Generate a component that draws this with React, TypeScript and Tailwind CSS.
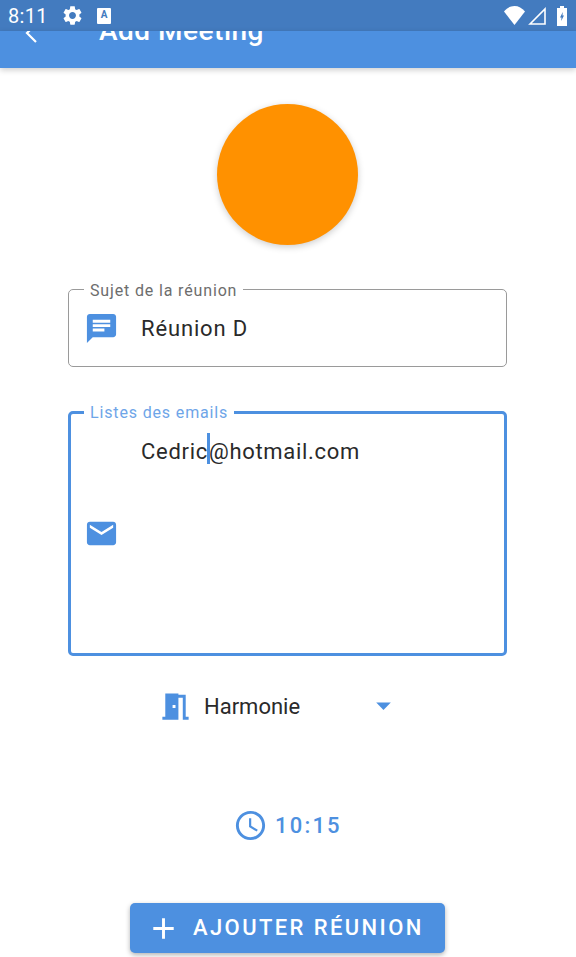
import type { ReactNode } from 'react';

function MdIcon({ d, className }: { d: string; className: string }) {
  return (
    <svg viewBox="0 0 24 24" fill="currentColor" className={className}>
      <path d={d} />
    </svg>
  );
}

const ICONS = {
  message: 'M20 2H4c-1.1 0-1.99.9-1.99 2L2 22l4-4h14c1.1 0 2-.9 2-2V4c0-1.1-.9-2-2-2zM6 9h12v2H6V9zm8 5H6v-2h8v2zm4-6H6V6h12v2z',
  mail: 'M20 4H4c-1.1 0-1.99.9-1.99 2L2 18c0 1.1.9 2 2 2h16c1.1 0 2-.9 2-2V6c0-1.1-.9-2-2-2zm0 4l-8 5-8-5V6l8 5 8-5v2z',
  door: 'M14 6v15H3v-2h2V3h9v1h5v15h2v2h-4V6h-3zm-4 5v2h2v-2h-2z',
  dropdown: 'M7 10l5 5 5-5z',
  clock: 'M11.99 2C6.47 2 2 6.48 2 12s4.47 10 9.99 10C17.52 22 22 17.52 22 12S17.52 2 11.99 2zM12 20c-4.42 0-8-3.58-8-8s3.58-8 8-8 8 3.58 8 8-3.58 8-8 8zm.5-13H11v6l5.25 3.15.75-1.23-4.5-2.67z',
  plus: 'M19 13h-6v6h-2v-6H5v-2h6V5h2v6h6v2z',
  gear: 'M19.14 12.94c.04-.3.06-.61.06-.94 0-.32-.02-.64-.07-.94l2.03-1.58c.18-.14.23-.41.12-.61l-1.92-3.32c-.12-.22-.37-.29-.59-.22l-2.39.96c-.5-.38-1.03-.7-1.62-.94l-.36-2.54c-.04-.24-.24-.41-.48-.41h-3.84c-.24 0-.43.17-.47.41l-.36 2.54c-.59.24-1.13.57-1.62.94l-2.39-.96c-.22-.08-.47 0-.59.22L2.74 8.87c-.12.21-.08.47.12.61l2.03 1.58c-.05.3-.09.63-.09.94s.02.64.07.94l-2.03 1.58c-.18.14-.23.41-.12.61l1.92 3.32c.12.22.37.29.59.22l2.39-.96c.5.38 1.03.7 1.62.94l.36 2.54c.05.24.24.41.48.41h3.84c.24 0 .44-.17.47-.41l.36-2.54c.59-.24 1.13-.56 1.62-.94l2.39.96c.22.08.47 0 .59-.22l1.92-3.32c.12-.22.07-.47-.12-.61l-2.01-1.58zM12 15.6c-1.98 0-3.6-1.62-3.6-3.6s1.62-3.6 3.6-3.6 3.6 1.62 3.6 3.6-1.62 3.6-3.6 3.6z',
};

function StatusBar() {
  return (
    <div className="flex h-[31px] shrink-0 items-center bg-[#437bbf] pl-2 pr-[9px] text-white">
      <span className="w-[38px] text-[20px] leading-none tracking-[0.3px]">8:11</span>
      <MdIcon d={ICONS.gear} className="ml-[15px] h-[23px] w-[23px]" />
      <div className="ml-[13px] flex h-[16px] w-[14px] items-start justify-center rounded-[1px] bg-white text-[10px] font-bold leading-[13px] text-[#437bbf]">
        A
      </div>
      <div className="flex-1" />
      <svg viewBox="0 0 21 19" fill="white" className="h-[19px] w-[21px]">
        <path d="M10.5 19 0 5.5C3 2 6.500 0 10.500 0S18 2 21 5.500z" />
      </svg>
      <svg viewBox="0 0 18 18" className="ml-[3px] h-[18px] w-[18px]" fill="none" stroke="white" strokeWidth="1.6">
        <path d="M2 17 17 2v15z" />
      </svg>
      <svg viewBox="0 0 10 20" fill="white" className="ml-[11px] h-[20px] w-[10px]">
        <path fillRule="evenodd" d="M3 0h4v2h3v18H0V2h3zM5.800 6 3 11.500h1.500L4.200 15 7 9.500H5.500z" />
      </svg>
    </div>
  );
}

function AppBar() {
  return (
    <div className="relative z-10 flex h-[37px] shrink-0 items-end overflow-hidden bg-[#4d90e0] shadow-[0_2px_6px_rgba(0,0,0,0.2)]">
      <div className="mb-[22px] flex items-end text-white">
        <svg viewBox="0 0 24 24" className="mb-px ml-[24px] h-[24px] w-[24px]" fill="none" stroke="white" strokeWidth="2.2">
          <path d="M12 3 3 12l9 9" />
        </svg>
        <span className="ml-[51px] text-[28px] font-medium leading-[30px] tracking-[0.5px]">Add Meeting</span>
      </div>
    </div>
  );
}

function OutlinedField({
  label,
  focused,
  className,
  children,
}: {
  label: string;
  focused?: boolean;
  className: string;
  children: ReactNode;
}) {
  return (
    <div
      className={
        focused
          ? `relative ml-[68px] mr-[69px] rounded-[5px] border-[3px] border-[#4d90e0] ${className}`
          : `relative ml-[68px] mr-[69px] rounded-[5px] border-[1.5px] border-[#9a9a9a] ${className}`
      }
    >
      <span
        className={
          focused
            ? 'absolute -top-[10px] left-[13px] bg-white px-[6px] text-[16px] leading-[18px] tracking-[0.85px] text-[#6ea5e8]'
            : 'absolute -top-[8px] left-[15px] bg-white px-[6px] text-[16px] leading-[18px] tracking-[0.85px] text-[#6d6d6d]'
        }
      >
        {label}
      </span>
      {children}
    </div>
  );
}

export default function App() {
  return (
    <div className="flex h-[957px] w-[576px] flex-col overflow-hidden bg-white font-['Roboto',sans-serif] text-[#2a2a2a]">
      <StatusBar />
      <AppBar />

      <div className="ml-[217px] mt-[36px] h-[141px] w-[141px] shrink-0 rounded-full bg-[#ff9100] shadow-[0_2px_7px_rgba(0,0,0,0.2)]" />

      <OutlinedField label="Sujet de la réunion" className="mt-[44px] flex h-[78px] shrink-0 items-center">
        <MdIcon d={ICONS.message} className="ml-[15px] h-[35px] w-[35px] text-[#4d90e0]" />
        <span className="ml-[22px] translate-y-px text-[22px] leading-none tracking-[0.85px]">Réunion D</span>
      </OutlinedField>

      <OutlinedField label="Listes des emails" focused className="mt-[44px] flex h-[245px] shrink-0 items-center">
        <MdIcon d={ICONS.mail} className="ml-[13px] h-[35px] w-[35px] text-[#4d90e0]" />
        <div className="ml-[22px] h-full self-start pt-[14px] text-[22px] leading-[26px] tracking-[0.7px]">
          Cedric
          <span className="-mx-px inline-block h-[31px] w-[3px] translate-y-[5px] bg-[#4d90e0]" />
          @hotmail.com
        </div>
      </OutlinedField>

      <div className="ml-[158px] mt-[33px] flex h-[35px] w-[243px] shrink-0 items-center">
        <MdIcon d={ICONS.door} className="h-[35px] w-[35px] text-[#4d90e0]" />
        <span className="ml-[11px] flex-1 text-[22px] leading-none">Harmonie</span>
        <MdIcon d={ICONS.dropdown} className="h-[35px] w-[35px] -translate-y-px text-[#4d90e0]" />
      </div>

      <div className="ml-[233px] mt-[84px] flex h-[35px] shrink-0 items-center text-[#4d90e0]">
        <MdIcon d={ICONS.clock} className="h-[35px] w-[35px]" />
        <span className="ml-[7px] text-[22px] font-medium leading-none tracking-[2.2px]">10:15</span>
      </div>

      <button className="ml-[130px] mt-[60px] flex h-[50px] w-[315px] shrink-0 items-center rounded-[5px] bg-[#4d90e0] pl-[16px] text-white shadow-[0_2px_5px_rgba(0,0,0,0.3)]">
        <MdIcon d={ICONS.plus} className="h-[35px] w-[35px]" />
        <span className="ml-[12px] text-[22px] font-medium leading-none tracking-[2.4px]">AJOUTER RÉUNION</span>
      </button>
    </div>
  );
}
